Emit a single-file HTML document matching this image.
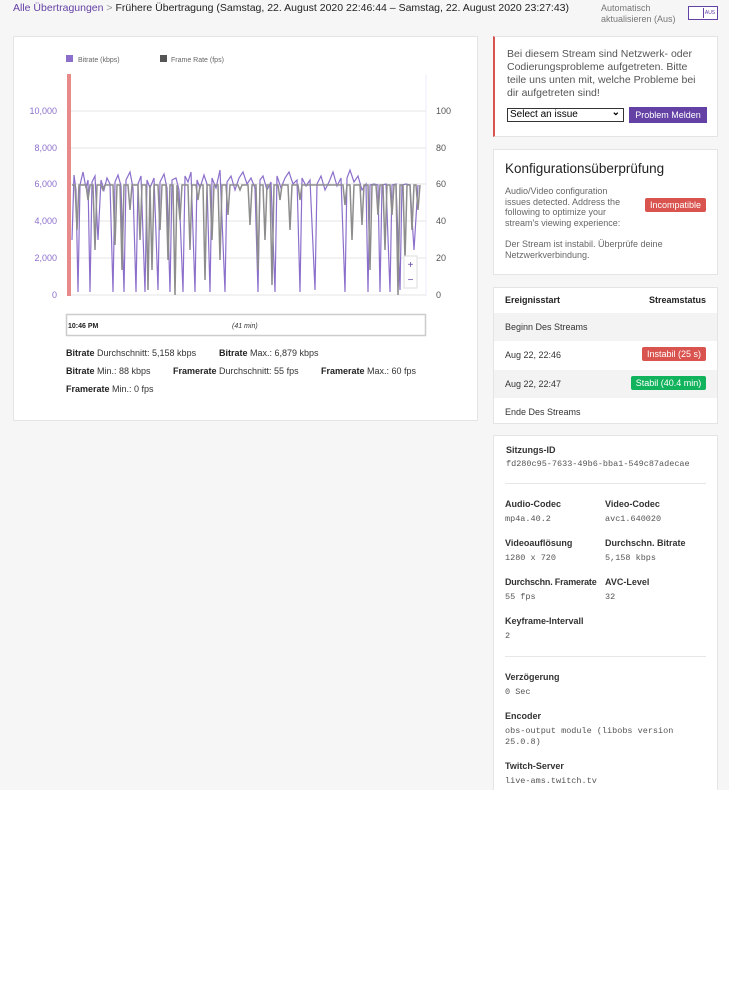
<!DOCTYPE html>
<html><head><meta charset="utf-8">
<style>
*{box-sizing:border-box;margin:0;padding:0}
body{width:729px;height:999px;background:#fff;font-family:"Liberation Sans",Arial,sans-serif;color:#222;position:relative;overflow:hidden}
.bg{position:absolute;left:0;top:0;width:729px;height:790px;background:#f6f6f6}
.abs{position:absolute}
.card{position:absolute;background:#fff;border:1px solid #e4e4e4}
.top{left:13px;top:2px;font-size:10.5px;color:#222;white-space:nowrap}
.top a{color:#6441a5;text-decoration:none}
.top .gt{color:#999}
.auto{left:601px;top:3px;font-size:9px;color:#777;line-height:11px}
.tog{left:688px;top:6px;width:30px;height:14px;border:1px solid #6441a5;background:#fff}
.tog span{position:absolute;right:1px;top:1px;width:13px;height:10px;border-left:1px solid #6441a5;font-size:5px;color:#6441a5;line-height:10px;text-align:center}
.stats{font-size:9px;color:#333}
.stats b{color:#222}
.lbl{font-size:9px;font-weight:bold;color:#333;white-space:nowrap}
.mono{font-family:"Liberation Mono",monospace;font-size:8.5px;color:#555}
.badge{position:absolute;color:#fff;font-size:9px;border-radius:2px;text-align:center;line-height:14px;height:14px}
.row{position:absolute;left:0;width:223px;height:28px;font-size:9px;color:#333;padding-left:11px;line-height:28px}
</style></head><body>
<div class="bg"></div>
<div class="abs top"><a>Alle Übertragungen</a> <span class="gt">&gt;</span> Frühere Übertragung (Samstag, 22. August 2020 22:46:44 – Samstag, 22. August 2020 23:27:43)</div>
<div class="abs auto">Automatisch<br>aktualisieren (Aus)</div>
<div class="abs tog"><span>AUS</span></div>

<div class="card" style="left:13px;top:36px;width:465px;height:385px"></div>
<svg class="abs" style="left:0;top:0" width="480" height="420">
<rect x="66" y="55" width="7" height="7" fill="#8c6fcb"/>
<text x="78" y="62" font-size="7" fill="#666" font-family="Liberation Sans">Bitrate (kbps)</text>
<rect x="160" y="55" width="7" height="7" fill="#555"/>
<text x="171" y="62" font-size="7" fill="#666" font-family="Liberation Sans">Frame Rate (fps)</text>
<line x1="426" y1="74" x2="426" y2="296" stroke="#eef" stroke-width="1"/>
<g stroke="#e6e6e6" stroke-width="1">
<line x1="67" y1="111" x2="426" y2="111"/><line x1="67" y1="148" x2="426" y2="148"/>
<line x1="67" y1="184" x2="426" y2="184"/><line x1="67" y1="221" x2="426" y2="221"/>
<line x1="67" y1="258" x2="426" y2="258"/><line x1="67" y1="295" x2="426" y2="295"/>
</g>
<g font-size="9" fill="#8c6fcb" font-family="Liberation Sans" text-anchor="end">
<text x="57" y="114">10,000</text><text x="57" y="151">8,000</text><text x="57" y="187">6,000</text>
<text x="57" y="224">4,000</text><text x="57" y="261">2,000</text><text x="57" y="298">0</text></g>
<g font-size="9" fill="#555" font-family="Liberation Sans">
<text x="436" y="114">100</text><text x="436" y="151">80</text><text x="436" y="187">60</text>
<text x="436" y="224">40</text><text x="436" y="261">20</text><text x="436" y="298">0</text></g>
<path fill="none" stroke="#8c6fcb" stroke-width="1.2" d="M72 240 L74 175 L76 190 L78 292 L80 185 L83 172 L86 188 L88 180 L90 292 L92 182 L95 176 L98 240 L101 180 L104 190 L107 178 L110 184 L113 292 L115 182 L118 175 L121 186 L124 292 L126 180 L130 172 L133 188 L136 292 L138 184 L141 176 L145 292 L147 180 L150 188 L154 178 L158 290 L160 182 L164 174 L167 188 L170 292 L172 180 L176 178 L179 190 L183 292 L185 176 L188 182 L191 172 L195 292 L197 180 L200 188 L204 175 L207 184 L210 292 L212 178 L216 188 L220 170 L225 292 L227 182 L231 176 L235 190 L239 178 L243 172 L247 184 L251 178 L255 188 L258 292 L260 180 L263 176 L267 190 L271 182 L275 292 L277 176 L281 188 L285 178 L289 172 L293 184 L297 180 L300 292 L302 178 L306 186 L310 180 L315 290 L317 184 L321 176 L325 190 L329 182 L333 172 L337 186 L341 178 L345 292 L347 178 L350 170 L354 182 L358 176 L362 190 L366 184 L368 292 L370 185 L374 184 L378 185 L380 292 L382 185 L386 184 L390 292 L392 185 L396 184 L400 290 L402 185 L406 184 L410 185 L414 250 L418 185"/>
<path fill="none" stroke="#8d8d8d" stroke-width="1.5" d="M72 185 L75 185 L77 230 L79 185 L86 185 L88 200 L90 185 L93 185 L95 250 L97 185 L101 185 L103 190 L105 185 L113 185 L115 245 L117 185 L120 185 L122 270 L124 185 L128 185 L130 210 L132 185 L138 185 L140 240 L142 185 L146 185 L148 290 L150 185 L152 270 L154 185 L158 185 L160 230 L162 185 L166 185 L168 260 L170 185 L173 185 L175 295 L177 185 L180 220 L182 185 L188 185 L190 250 L192 185 L196 185 L198 200 L200 185 L203 185 L205 280 L207 185 L210 185 L212 240 L214 185 L218 185 L220 260 L222 185 L226 185 L228 215 L230 185 L238 185 L240 190 L242 185 L248 185 L250 225 L252 185 L256 185 L258 270 L260 185 L263 185 L265 240 L267 185 L270 185 L272 285 L274 185 L278 185 L280 200 L282 185 L288 185 L290 230 L292 185 L298 185 L300 200 L302 185 L343 185 L345 205 L347 185 L350 185 L352 240 L354 185 L360 185 L362 225 L364 185 L368 185 L370 270 L372 185 L376 185 L378 215 L380 185 L383 185 L385 250 L387 185 L390 185 L392 215 L394 185 L396 185 L398 295 L400 185 L403 185 L405 260 L407 185 L410 185 L412 230 L414 185 L416 185 L418 210 L420 185"/>
<rect x="67" y="74" width="4" height="222" fill="#e88a8a"/>
<rect x="404" y="256" width="13" height="32" fill="#fff" stroke="#ddd"/>
<text x="410.5" y="268" font-size="10" fill="#6441a5" text-anchor="middle">+</text>
<text x="410.5" y="283" font-size="10" fill="#6441a5" text-anchor="middle">−</text>
<rect x="66.5" y="314.5" width="359" height="21" fill="#fff" stroke="#ccc" stroke-width="1.5"/>
<text x="68" y="328" font-size="7" font-weight="bold" fill="#222" font-family="Liberation Sans">10:46 PM</text>
<text x="232" y="328" font-size="7" font-style="italic" fill="#333" font-family="Liberation Sans">(41 min)</text>
</svg>
<div class="abs stats" style="left:66px;top:348px"><b>Bitrate</b> Durchschnitt: 5,158 kbps</div>
<div class="abs stats" style="left:219px;top:348px"><b>Bitrate</b> Max.: 6,879 kbps</div>
<div class="abs stats" style="left:66px;top:366px"><b>Bitrate</b> Min.: 88 kbps</div>
<div class="abs stats" style="left:173px;top:366px"><b>Framerate</b> Durchschnitt: 55 fps</div>
<div class="abs stats" style="left:321px;top:366px"><b>Framerate</b> Max.: 60 fps</div>
<div class="abs stats" style="left:66px;top:384px"><b>Framerate</b> Min.: 0 fps</div>

<div class="card" style="left:493px;top:36px;width:225px;height:101px;border-left:2px solid #d9534f">
<div class="abs" style="left:12px;top:11px;font-size:10.5px;color:#555;line-height:13px;width:196px">Bei diesem Stream sind Netzwerk- oder Codierungsprobleme aufgetreten. Bitte teile uns unten mit, welche Probleme bei dir aufgetreten sind!</div>
<div class="abs" style="left:12px;top:71px;width:117px;height:14px;border:1px solid #333;font-size:10px;line-height:12px;padding-left:2px;color:#000">Select an issue<span style="position:absolute;right:3px;top:-2px;font-size:10px;font-weight:bold">⌄</span></div>
<div class="abs" style="left:134px;top:70px;width:78px;height:16px;background:#6441a5;color:#fff;font-size:9px;line-height:16px;text-align:center">Problem Melden</div>
</div>

<div class="card" style="left:493px;top:149px;width:225px;height:126px">
<div class="abs" style="left:11px;top:11px;font-size:13.5px;color:#222">Konfigurationsüberprüfung</div>
<div class="abs" style="left:11px;top:36px;font-size:9px;color:#666;line-height:10.5px;width:130px">Audio/Video configuration issues detected. Address the following to optimize your stream's viewing experience:</div>
<div class="badge" style="left:151px;top:48px;width:61px;background:#d9534f">Incompatible</div>
<div class="abs" style="left:11px;top:89px;font-size:9px;color:#666;line-height:10.5px;width:200px">Der Stream ist instabil. Überprüfe deine Netzwerkverbindung.</div>
</div>

<div class="card" style="left:493px;top:287px;width:225px;height:137px">
<div class="abs" style="left:11px;top:7px;font-size:9px;font-weight:bold">Ereignisstart</div>
<div class="abs" style="right:11px;top:7px;font-size:9px;font-weight:bold">Streamstatus</div>
<div class="row" style="top:25px;background:#f3f3f3">Beginn Des Streams</div>
<div class="row" style="top:53px;height:29px;line-height:29px">Aug 22, 22:46</div>
<div class="badge" style="left:148px;top:59px;width:64px;background:#d9534f">Instabil (25 s)</div>
<div class="row" style="top:82px;background:#f3f3f3">Aug 22, 22:47</div>
<div class="badge" style="left:137px;top:88px;width:75px;background:#12b35d">Stabil (40.4 min)</div>
<div class="row" style="top:110px">Ende Des Streams</div>
</div>

<div class="card" style="left:493px;top:435px;width:225px;height:370px">
<div class="abs lbl" style="left:12px;top:9px">Sitzungs-ID</div>
<div class="abs mono" style="left:12px;top:23px">fd280c95-7633-49b6-bba1-549c87adecae</div>
<div class="abs" style="left:11px;top:47px;width:201px;height:1px;background:#e6e6e6"></div>
<div class="abs lbl" style="left:11px;top:63px">Audio-Codec</div><div class="abs mono" style="left:11px;top:78px">mp4a.40.2</div>
<div class="abs lbl" style="left:111px;top:63px">Video-Codec</div><div class="abs mono" style="left:111px;top:78px">avc1.640020</div>
<div class="abs lbl" style="left:11px;top:102px">Videoauflösung</div><div class="abs mono" style="left:11px;top:117px">1280 x 720</div>
<div class="abs lbl" style="left:111px;top:102px">Durchschn. Bitrate</div><div class="abs mono" style="left:111px;top:117px">5,158 kbps</div>
<div class="abs lbl" style="left:11px;top:141px;letter-spacing:-0.2px">Durchschn. Framerate</div><div class="abs mono" style="left:11px;top:156px">55 fps</div>
<div class="abs lbl" style="left:111px;top:141px">AVC-Level</div><div class="abs mono" style="left:111px;top:156px">32</div>
<div class="abs lbl" style="left:11px;top:180px">Keyframe-Intervall</div><div class="abs mono" style="left:11px;top:195px">2</div>
<div class="abs" style="left:11px;top:220px;width:201px;height:1px;background:#e6e6e6"></div>
<div class="abs lbl" style="left:11px;top:236px">Verzögerung</div><div class="abs mono" style="left:11px;top:251px">0 Sec</div>
<div class="abs lbl" style="left:11px;top:275px">Encoder</div><div class="abs mono" style="left:11px;top:290px;width:200px;line-height:11px">obs-output module (libobs version 25.0.8)</div>
<div class="abs lbl" style="left:11px;top:325px">Twitch-Server</div><div class="abs mono" style="left:11px;top:340px">live-ams.twitch.tv</div>
</div>
<div class="abs" style="left:0;top:790px;width:729px;height:209px;background:#fff"></div>
</body></html>
